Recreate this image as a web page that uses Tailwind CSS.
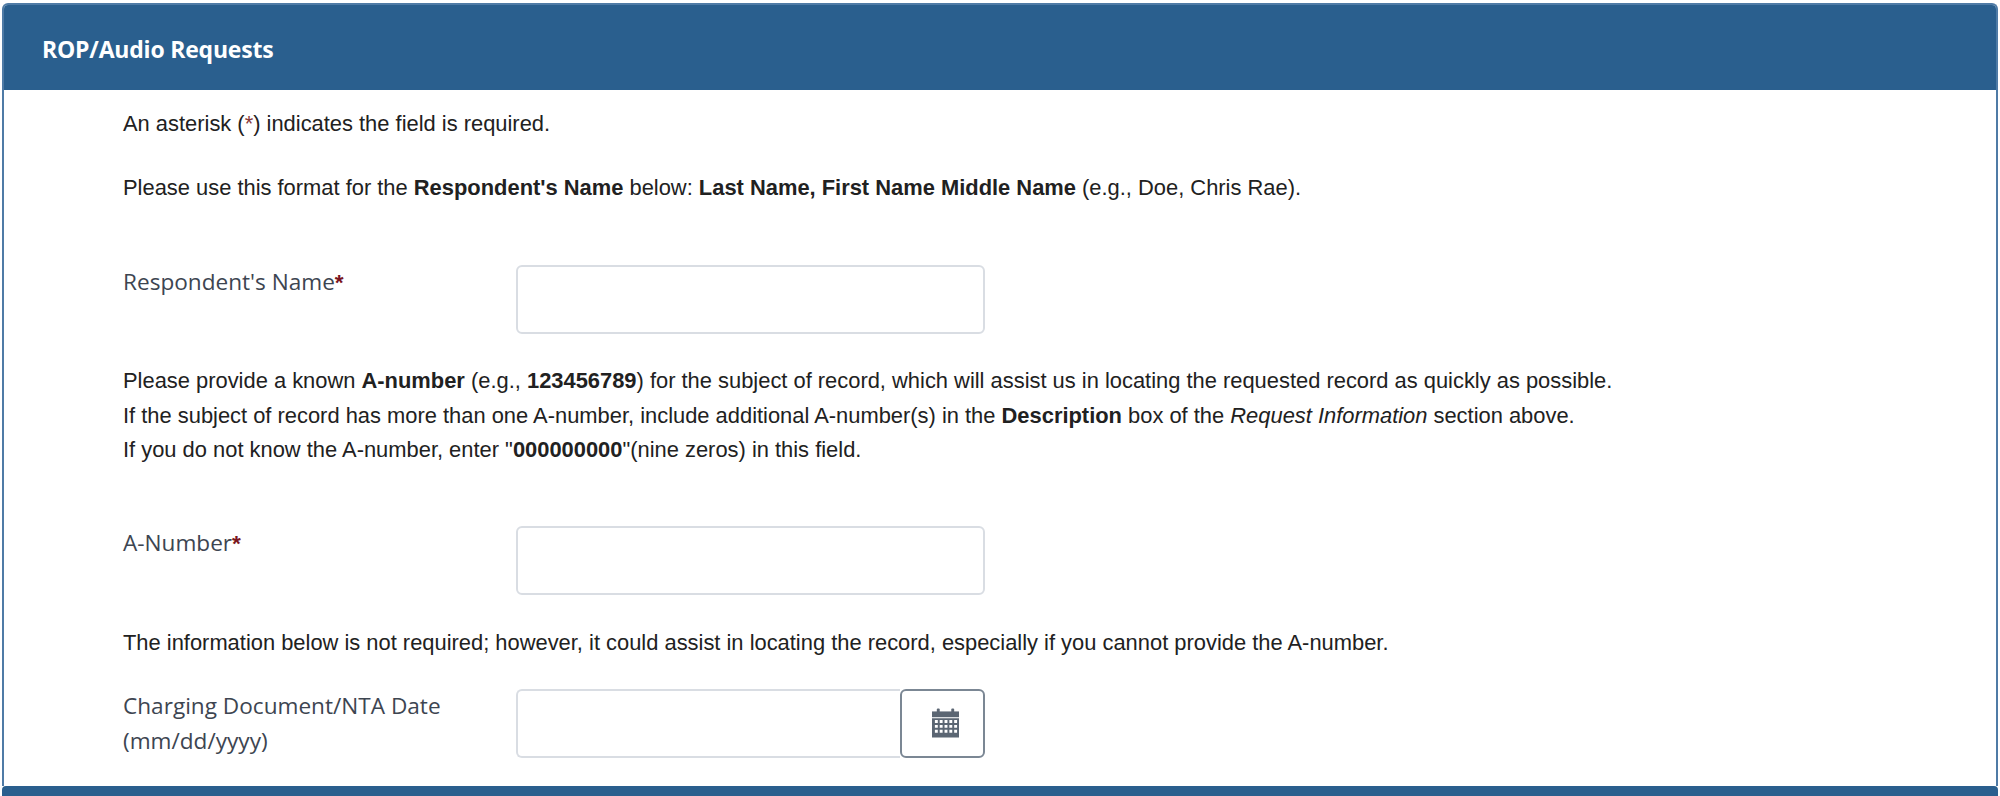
<!DOCTYPE html>
<html lang="en">
<head>
  <meta charset="UTF-8" />
  <title>ROP/Audio Requests</title>
  <script src="https://cdn.jsdelivr.net/npm/@tailwindcss/browser@4"></script>
</head>
<body class="bg-white h-[796px] overflow-hidden font-['Liberation_Sans',Arial,sans-serif] text-[#212121]">

  <div class="pt-[3px] px-[2px]">
    <div class="border-2 border-[#4f7ba6] border-b-0 rounded-t-[6px] h-[783px] overflow-hidden">
      <!-- Panel header -->
      <div class="h-[85px] -mx-[1px] bg-[#2a5f8e] flex items-center pl-[39px]">
        <h2 class="text-[23px] pt-[4px] font-bold text-white tracking-[-0.2px] font-['Open_Sans',sans-serif]">ROP/Audio Requests</h2>
      </div>

      <div class="pl-[119px] text-[21.9px] leading-[34.5px]">
        <p class="pt-[17px]">An asterisk (<span class="text-[#8a3a3a]">*</span>) indicates the field is required.</p>
        <p class="mt-[29px]">Please use this format for the <b>Respondent's Name</b> below: <b>Last Name, First Name Middle Name</b> (e.g., Doe, Chris Rae).</p>

        <!-- Respondent name -->
        <div class="flex mt-[60px]">
          <label class="w-[393px] text-[#3d4551] font-['Open_Sans',sans-serif] text-[22.6px]">Respondent's Name<span class="text-[#7a1420] font-bold font-['Liberation_Sans',sans-serif]">*</span></label>
          <input type="text" class="w-[469px] h-[69px] bg-white border-2 border-[#d9dde3] rounded-[6px]" />
        </div>

        <div class="mt-[30px]">
          <p>Please provide a known <b>A-number</b> (e.g., <b>123456789</b>) for the subject of record, which will assist us in locating the requested record as quickly as possible.</p>
          <p>If the subject of record has more than one A-number, include additional A-number(s) in the <b>Description</b> box of the <i>Request Information</i> section above.</p>
          <p>If you do not know the A-number, enter "<b>000000000</b>"(nine zeros) in this field.</p>
        </div>

        <!-- A-number -->
        <div class="flex mt-[58px]">
          <label class="w-[393px] text-[#3d4551] font-['Open_Sans',sans-serif] text-[22.6px]">A-Number<span class="text-[#7a1420] font-bold font-['Liberation_Sans',sans-serif]">*</span></label>
          <input type="text" class="w-[469px] h-[69px] bg-white border-2 border-[#d9dde3] rounded-[6px]" />
        </div>

        <p class="mt-[31px]">The information below is not required; however, it could assist in locating the record, especially if you cannot provide the A-number.</p>

        <!-- Date -->
        <div class="flex mt-[29px]">
          <label class="w-[393px] text-[#3d4551] font-['Open_Sans',sans-serif] text-[22.6px]">Charging Document/NTA Date<br />(mm/dd/yyyy)</label>
          <div class="flex w-[469px] h-[69px]">
            <input type="text" class="flex-1 min-w-0 bg-white border-2 border-r-0 border-[#d9dde3] rounded-l-[6px]" />
            <button type="button" class="w-[85px] border-2 border-[#7b8794] rounded-[6px] flex items-center justify-center pl-[5px] pb-[1px]">
              <svg width="27" height="30" viewBox="0 0 28 30" fill="#5b6673">
                <rect x="5" y="0" width="3" height="5" rx="1" />
                <rect x="20" y="0" width="3" height="5" rx="1" />
                <rect x="0" y="3" width="28" height="6" />
                <path fill-rule="evenodd" d="M0 10h28v20H0z M3 12v3h3v-3z M8 12v3h3v-3z M13 12v3h3v-3z M18 12v3h3v-3z M23 12v3h3v-3z M3 17v3h3v-3z M8 17v3h3v-3z M13 17v3h3v-3z M18 17v3h3v-3z M23 17v3h3v-3z M3 22v3h3v-3z M8 22v3h3v-3z M13 22v3h3v-3z M18 22v3h3v-3z M23 22v3h3v-3z" />
              </svg>
            </button>
          </div>
        </div>
      </div>
    </div>
    <!-- Next panel header, cut off at the bottom -->
    <div class="h-[10px] bg-[#2a5f8e] rounded-t-[4px]"></div>
  </div>

</body>
</html>
